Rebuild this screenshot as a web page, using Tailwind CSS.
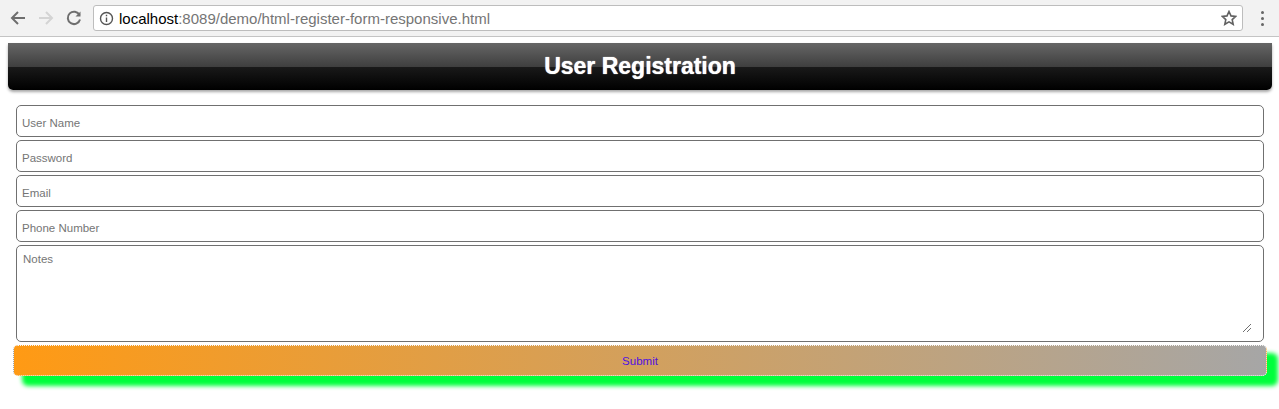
<!DOCTYPE html>
<html lang="en">
<head>
    <meta charset="UTF-8">
    <title>User Registration</title>
    <script src="https://cdn.jsdelivr.net/npm/@tailwindcss/browser@4"></script>
</head>
<body class="bg-white h-[409px] overflow-hidden font-['Liberation_Sans',sans-serif]">
    <!-- Browser toolbar -->
    <div class="h-[37px] bg-[#f2f2f2] border-b border-[#c4c4c4] flex items-center">
        <div class="w-[93px] shrink-0 flex items-center pl-[9px] gap-[10px]">
            <svg class="w-[18px] h-[18px]" viewBox="0 0 18 18" fill="none" stroke="#6e6e6e" stroke-width="2"><path d="M16 9H3M9 3L3 9l6 6"/></svg>
            <svg class="w-[18px] h-[18px]" viewBox="0 0 18 18" fill="none" stroke="#d4d4d4" stroke-width="2"><path d="M2 9h13M9 3l6 6-6 6"/></svg>
            <svg class="w-[18px] h-[18px]" viewBox="0 0 18 18" fill="none" stroke="#6e6e6e" stroke-width="2"><path d="M14.500 6A6.200 6.200 0 1 0 15 10.500"/><path d="M15.500 2.500V7.500H10.500" fill="#6e6e6e" stroke="none"/></svg>
        </div>
        <div class="w-[1150px] h-[26px] bg-white border border-[#bdbdbd] rounded-[3px] flex items-center pl-[5px] pr-[5px]">
            <svg class="w-[15px] h-[15px] shrink-0" viewBox="0 0 15 15" fill="none" stroke="#555" stroke-width="1.400"><circle cx="7.500" cy="7.500" r="6"/><path d="M7.500 6.500v4.500M7.500 3.800v1.500"/></svg>
            <span class="ml-[5px] text-[15px] leading-none text-black">localhost<span class="text-[#757575]">:8089/demo/html-register-form-responsive.html</span></span>
            <svg class="w-[16px] h-[16px] ml-auto" viewBox="0 0 16 16" fill="none" stroke="#616161" stroke-width="1.600"><path d="M8 1.500l2 4.400 4.700.5-3.500 3.200 1 4.700L8 11.900l-4.200 2.400 1-4.700L1.300 6.400 6 5.900z"/></svg>
        </div>
        <div class="ml-[18px] flex flex-col gap-[3px]">
            <div class="w-[3px] h-[3px] rounded-full bg-[#666]"></div>
            <div class="w-[3px] h-[3px] rounded-full bg-[#666]"></div>
            <div class="w-[3px] h-[3px] rounded-full bg-[#666]"></div>
        </div>
    </div>

    <!-- Page -->
    <div class="pl-[8px] pr-[7px] pt-[6px]">
        <div class="h-[47px] rounded-b-[5px] bg-[linear-gradient(to_bottom,#666666_0%,#3f3f3f_50%,#1a1a1a_50%,#000000_100%)] shadow-[0_2px_3px_rgba(0,0,0,0.35)] flex items-center justify-center">
            <h1 class="text-white text-[23px] font-bold leading-none [text-shadow:0_0_1px_#fff]">User Registration</h1>
        </div>

        <form class="mt-[15px] px-[8px] flex flex-col gap-[3px]">
            <input type="text" placeholder="User Name" class="h-[32px] w-full border border-[#707070] rounded-[5px] px-[5px] pt-[3px] text-[11.500px] placeholder:text-[#757575]">
            <input type="password" placeholder="Password" class="h-[32px] w-full border border-[#707070] rounded-[5px] px-[5px] pt-[3px] text-[11.500px] placeholder:text-[#757575]">
            <input type="text" placeholder="Email" class="h-[32px] w-full border border-[#707070] rounded-[5px] px-[5px] pt-[3px] text-[11.500px] placeholder:text-[#757575]">
            <input type="text" placeholder="Phone Number" class="h-[32px] w-full border border-[#707070] rounded-[5px] px-[5px] pt-[3px] text-[11.500px] placeholder:text-[#757575]">
            <div class="relative">
                <textarea placeholder="Notes" class="block resize-none h-[97px] w-full border border-[#707070] rounded-[5px] px-[6px] py-[5px] text-[11.500px] placeholder:text-[#757575]"></textarea>
                <!-- resize grip sits further in than the native one -->
                <svg class="absolute right-[13px] bottom-[10px] w-[8px] h-[8px]" viewBox="0 0 8 8" fill="none" stroke="#707070"><path d="M0 8L8 0M4 8L8 4"/></svg>
            </div>
            <button type="button" class="-ml-[3px] w-[1254px] h-[31px] pt-[2px] rounded-[5px] border border-dotted border-[#f5f5f5] bg-[linear-gradient(to_right,#ff9a14_0%,#a6a6a6_100%)] shadow-[10px_9px_4px_1px_#00ff3c] text-[11.500px] text-[#5010e0]">Submit</button>
        </form>
    </div>
</body>
</html>
